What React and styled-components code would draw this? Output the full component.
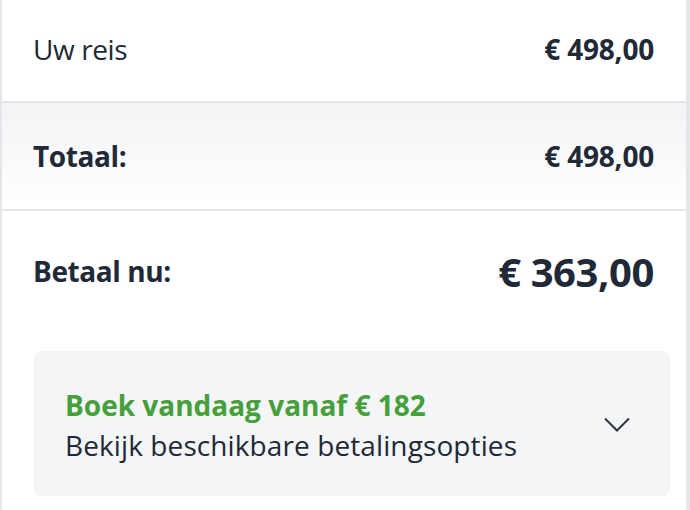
import styled, { createGlobalStyle } from 'styled-components';

const GlobalStyle = createGlobalStyle`
  body {
    margin: 0;
    background: #ffffff;
    font-family: "Open Sans", "Noto Sans", sans-serif;
    color: #1f2937;
  }
`;

const App = () => {
  return (
    <>
      <GlobalStyle />
      <StyledSummary>
        <Row $lift={4}>
          <Label>Uw reis</Label>
          <Amount>€ 498,00</Amount>
        </Row>
        <Row $shaded $height={106}>
          <Label $bold>Totaal:</Label>
          <Amount>€ 498,00</Amount>
        </Row>
        <Row $plain $height={120}>
          <Label $bold>Betaal nu:</Label>
          <Amount $big>€ 363,00</Amount>
        </Row>
        <Options>
          <OptionsText>
            <OptionsTitle>Boek vandaag vanaf € 182</OptionsTitle>
            <OptionsSub>Bekijk beschikbare betalingsopties</OptionsSub>
          </OptionsText>
          <svg width="26" height="16" viewBox="0 0 26 16" fill="none">
            <path d="M1 1.5 L13 13.5 L25 1.5" stroke="#2b3442" strokeWidth="2" />
          </svg>
        </Options>
      </StyledSummary>
    </>
  );
}

export default App;

const StyledSummary = styled.div`
  width: 684px;
  height: 510px;
  border-left: 2px solid #e4e6e9;
  border-right: 4px solid #e4e6e9;
`;

const Row = styled.div`
  box-sizing: border-box;
  height: ${p => (p.$height || 101) + (p.$plain ? 0 : 2)}px;
  display: flex;
  align-items: center;
  justify-content: space-between;
  padding: 0 32px ${p => p.$lift || 0}px 31px;
  border-bottom: ${p => p.$plain ? 'none' : '2px solid #e4e6e9'};
  background: ${p => p.$shaded ? 'linear-gradient(#f3f4f6, #ffffff)' : '#ffffff'};
`;

const Label = styled.span`
  font-size: 28px;
  font-weight: ${p => p.$bold ? 700 : 400};
  letter-spacing: -0.4px;
`;

const Amount = styled.span`
  font-size: ${p => p.$big ? '40px' : '28px'};
  font-weight: 700;
  letter-spacing: ${p => p.$big ? '-0.4px' : '-0.2px'};
`;

const Options = styled.div`
  margin: 20px 16px 0 32px;
  height: 143px;
  border-radius: 8px;
  background: #f4f5f7;
  display: flex;
  align-items: center;
  justify-content: space-between;
  padding: 2px 40px 0 31px;
`;

const OptionsText = styled.div`
  display: flex;
  flex-direction: column;
  line-height: 40px;
`;

const OptionsTitle = styled.span`
  color: #45a03b;
  font-size: 28px;
  font-weight: 700;
  letter-spacing: 0px;
`;

const OptionsSub = styled.span`
  font-size: 28px;
  letter-spacing: 0.1px;
`;
